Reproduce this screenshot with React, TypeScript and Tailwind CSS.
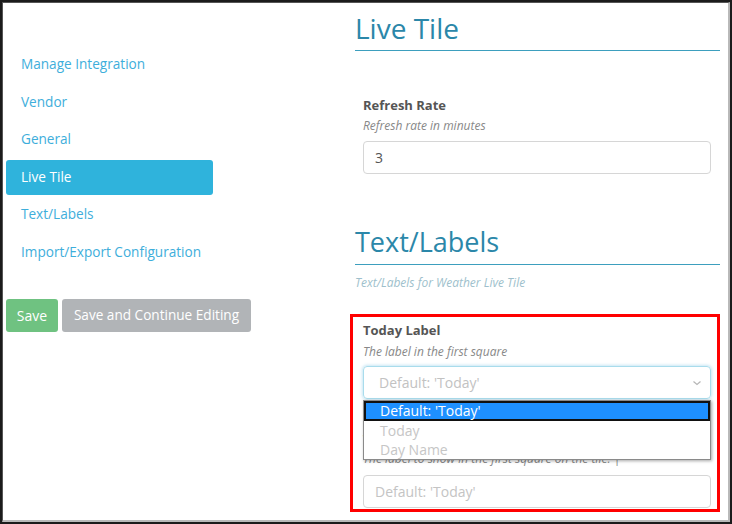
import React from "react";

const font = { fontFamily: "'Open Sans', 'Noto Sans', sans-serif" };

function NavItem({ label, active }: { label: string; active?: boolean }) {
  return (
    <div
      className={
        "h-[35px] flex items-center pl-[15px] rounded-[3px] text-[13.6px] " +
        (active ? "bg-[#2fb3dc] text-white" : "text-[#3eaedb]")
      }
    >
      {label}
    </div>
  );
}

export default function App() {
  return (
    <div
      style={font}
      className="w-[732px] h-[524px] bg-[#1b1b1b] p-[2px] overflow-hidden"
    >
      <div className="w-full h-full border-l border-t border-[#555] border-r-[2px] border-b-[2px] border-r-[#b9b9b9] border-b-[#b9b9b9] bg-white flex">
        {/* Left column */}
        <div className="w-[344px] shrink-0 pl-[3px] pt-[44px]">
          <div className="w-[207px] flex flex-col gap-[2.5px]">
            <NavItem label="Manage Integration" />
            <NavItem label="Vendor" />
            <NavItem label="General" />
            <NavItem label="Live Tile" active />
            <NavItem label="Text/Labels" />
            <NavItem label="Import/Export Configuration" />
          </div>
          <div className="flex gap-[4px] mt-[29px]">
            <div className="h-[33px] w-[52px] rounded-[3px] bg-[#6fc281] text-white text-[14px] flex items-center justify-center">
              Save
            </div>
            <div className="h-[33px] w-[189px] rounded-[3px] bg-[#b1b4b7] text-white text-[13.6px] flex items-center justify-center">
              Save and Continue Editing
            </div>
          </div>
        </div>

        {/* Right column */}
        <div className="w-[365px] shrink-0 ml-[8px]">
          <div className="h-[48px] border-b border-[#3d9fbe] text-[28px] leading-[40px] text-[#2b87a9] pt-[5px]">
            Live Tile
          </div>
          <div className="pl-[8px] pr-[9px] pt-[44px]">
            <div className="text-[13px] font-bold text-[#555] leading-[20px]">Refresh Rate</div>
            <div className="text-[12px] italic text-[#888] leading-[18px] mt-[2px]">Refresh rate in minutes</div>
            <div className="mt-[6px] h-[33px] border border-[#d6d6d6] rounded-[4px] flex items-center pl-[11px] text-[14px] text-[#555]">
              3
            </div>
          </div>
          <div className="mt-[48px] h-[43px] border-b border-[#3d9fbe] text-[27px] leading-[40px] text-[#2b87a9]">
            Text/Labels
          </div>
          <div className="text-[12px] italic text-[#9ebfcc] leading-[18px] mt-[9px]">
            Text/Labels for Weather Live Tile
          </div>
          <div className="mt-[22px] -ml-[5px] w-[370px] h-[198px] border-[3px] border-[#ff0000] pl-[10px] pr-[6px] pt-[3px]">
            <div className="text-[13px] font-bold text-[#555] leading-[20px]">Today Label</div>
            <div className="text-[12px] italic text-[#888] leading-[18px] mt-[3px]">The label in the first square</div>
            <div className="relative mt-[5px]">
              <div className="h-[33px] border border-[#a9dcec] rounded-[4px] shadow-[0_0_3px_1px_rgba(130,200,230,0.45)] flex items-center pl-[15px] pr-[8px] text-[14px] text-[#c2c2c2]">
                <span className="flex-1">Default: 'Today'</span>
                <svg width="10" height="8" viewBox="0 0 10 8">
                  <path d="M1.5 2.5 L5 5.5 L8.5 2.5" fill="none" stroke="#b5b5b5" strokeWidth="1.2" />
                </svg>
              </div>
              <div className="absolute left-0 right-0 top-[34px] h-[60px] bg-white border border-[#8a8a8a] shadow-[1px_1px_3px_rgba(0,0,0,0.35)] z-10 text-[14px] leading-[20px]">
                <div className="h-[20px] bg-[#1e90ff] border-[2px] border-[#111] text-white pl-[14px] flex items-center">
                  Default: 'Today'
                </div>
                <div className="h-[19px] text-[#c6c6c6] pl-[16px] flex items-center">Today</div>
                <div className="h-[19px] text-[#c6c6c6] pl-[16px] flex items-center">Day Name</div>
              </div>
              <div className="text-[13px] font-bold text-[#555] leading-[20px] mt-[30px]">Today Label Text</div>
              <div className="text-[12px] italic text-[#888] leading-[18px] mt-[1px]">
                The label to show in the first square on the tile. |
              </div>
              <div className="mt-[7px] h-[33px] border border-[#d6d6d6] rounded-[4px] flex items-center pl-[11px] text-[14px] text-[#c4c4c4]">
                Default: 'Today'
              </div>
            </div>
          </div>
        </div>
      </div>
    </div>
  );
}
